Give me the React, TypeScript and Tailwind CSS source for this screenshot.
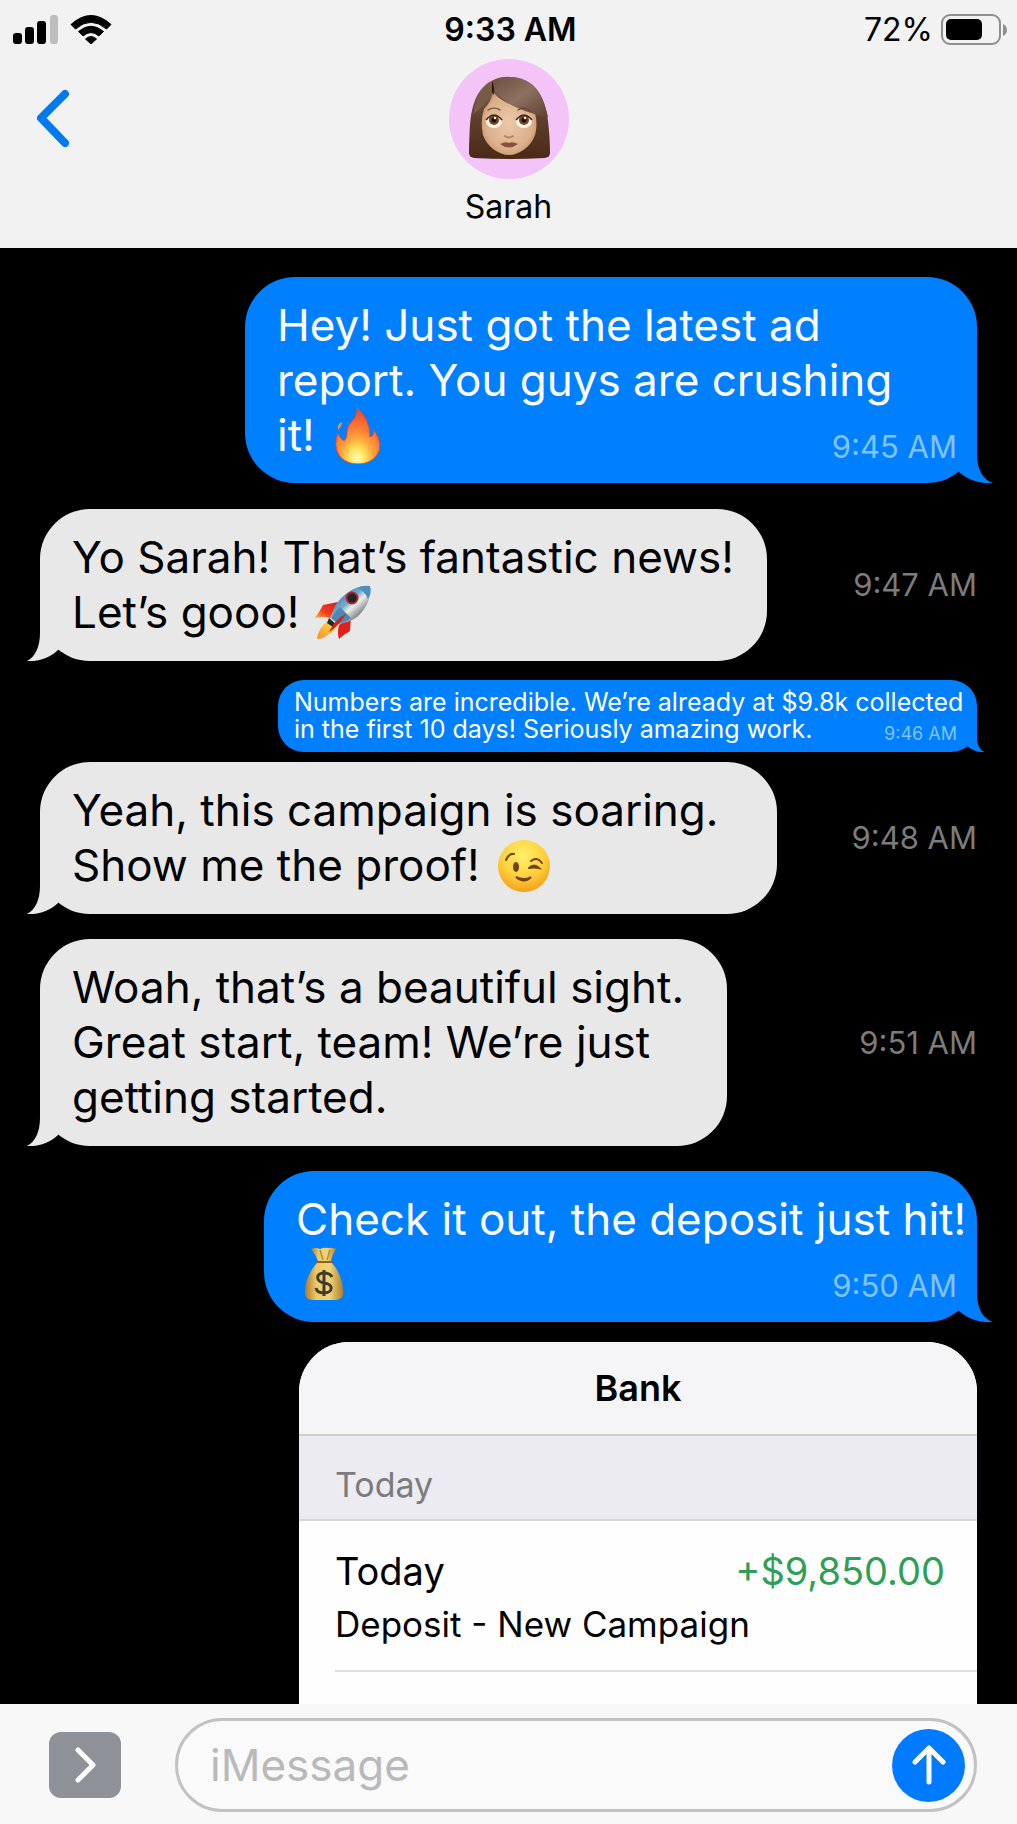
import type { ReactNode } from "react";

type Side = "sent" | "received";

function SignalIcon() {
  return (
    <svg width="46" height="30" viewBox="0 0 46 30" aria-label="Signal strength" role="img">
      <rect x="1" y="18" width="9" height="11" rx="3" />
      <rect x="13" y="12" width="9" height="17" rx="3" />
      <rect x="25" y="6" width="9" height="23" rx="3" />
      <rect x="38" y="0" width="8" height="29" rx="3" fill="#bdbdbd" />
    </svg>
  );
}

function WifiIcon() {
  return (
    <svg width="42" height="30" viewBox="0 0 42 30" aria-label="Wi-Fi" role="img">
      <g stroke="black" strokeWidth="1" strokeLinejoin="round">
        <path d="M1 9.500Q21-8.500 41 9.500L36.500 14Q21 .500 5.500 14Z" />
        <path d="M8.500 16.500Q21 6 33.500 16.500L29 21Q21 14 13 21Z" />
        <path d="M15.500 24Q21 19 26.500 24L21 29Z" />
      </g>
    </svg>
  );
}

function BatteryIcon() {
  return (
    <svg width="68" height="32" viewBox="0 0 68 32" aria-label="Battery" role="img">
      <rect x="1" y="1" width="58" height="29" rx="8" fill="none" stroke="#8e8e8e" strokeWidth="2" />
      <rect x="5" y="5" width="36" height="21" rx="5" />
      <path d="M62 10Q66 12 66 16T62 22Z" fill="#8e8e8e" />
    </svg>
  );
}

function Avatar() {
  return (
    <svg width="120" height="120" viewBox="0 0 120 120" role="img" aria-label="Sarah">
      <defs>
        <linearGradient id="hair" x1="0" y1="0" x2="0" y2="1">
          <stop offset="0" stopColor="#8a6c59" />
          <stop offset=".5" stopColor="#5e3f2d" />
          <stop offset="1" stopColor="#4a2917" />
        </linearGradient>
        <linearGradient id="bangs" x1="0" y1="0" x2="1" y2="1">
          <stop offset="0" stopColor="#6c4f3f" />
          <stop offset=".5" stopColor="#8d7060" />
          <stop offset="1" stopColor="#5f4331" />
        </linearGradient>
        <radialGradient id="skin" cx=".5" cy=".5" r=".6">
          <stop offset="0" stopColor="#ecc8a8" />
          <stop offset=".7" stopColor="#dcb08b" />
          <stop offset="1" stopColor="#bd8d66" />
        </radialGradient>
      </defs>
      <circle cx="60" cy="60" r="60" fill="#f4c4f8" />
      <path d="M60 18C34 18 23 37 21 66Q20 82 20 94Q20 98 25 99Q60 101 96 99Q101 98 101 94Q101 80 99 62C96 36 85 18 60 18Z" fill="url(#hair)" />
      <path d="M44 32C50 44 74 50 86 54Q89 66 86 76C82 88 70 96 60 96C50 96 38 88 34 76Q31 62 35 50Q43 42 44 32Z" fill="url(#skin)" />
      <path d="M43 22Q52 17 62 18C82 19 94 34 99 58Q92 57 82 54C63 48 47 40 43 22Z" fill="url(#bangs)" />
      <path d="M43 22Q41 33 45 36Q46 28 43 22Z" fill="#321c11" />
      <path d="M43 22Q28 31 24 55Q31 51 36 44Q44 36 43 22Z" fill="#785a48" />
      {[45, 75].map((x) => (
        <g key={x}>
          <ellipse cx={x} cy="62" rx="8" ry="7" fill="#fff6ec" />
          <circle cx={x} cy="61" r="5" fill="#754621" />
          <circle cx={x} cy="61" r="2.500" fill="#221006" />
          <circle cx={x + 1} cy="59" r="1.200" fill="white" />
          <path d={`M${x - 8} 61Q${x} 51 ${x + 8} 61`} fill="none" stroke="#3d2313" strokeWidth="1.500" />
        </g>
      ))}
      <path d="M39 51Q45 47 51 51M69 51Q75 47 81 52" fill="none" stroke="#6a432a" strokeWidth="1.200" strokeLinecap="round" />
      <path d="M56 77Q60 80 64 77" fill="none" stroke="#b9835f" strokeWidth="2" strokeLinecap="round" />
      <path d="M51 85Q57 82 60 84Q63 82 69 85Q60 92 51 85Z" fill="#8a4e3b" />
    </svg>
  );
}

function Fire() {
  return (
    <svg width="54" height="56" viewBox="0 0 54 56" className="shrink-0" role="img" aria-label="Fire">
      <defs>
        <radialGradient id="fire" cx=".48" cy=".9" r=".85">
          <stop offset="0" stopColor="#fff9bd" />
          <stop offset=".2" stopColor="#ffe760" />
          <stop offset=".42" stopColor="#ffa83c" />
          <stop offset=".65" stopColor="#ff7a35" />
          <stop offset="1" stopColor="#ee4a2a" />
        </radialGradient>
      </defs>
      <path d="M26 0Q39 11 39 29Q43 28 43 22Q53 37 46 47C38 59 16 59 8 47Q2 37 7 25Q9 31 13 33Q16 31 16 23Q17 17 21 13Q27 7 26 0Z" fill="url(#fire)" stroke="#ee4424" strokeWidth="1" />
      <path d="M7 22Q6 16 11 14Q11 18 7 22Z" fill="#ff8d48" />
    </svg>
  );
}

function Rocket() {
  return (
    <svg width="56" height="56" viewBox="0 0 56 56" className="shrink-0" role="img" aria-label="Rocket">
      <defs>
        <linearGradient id="hull" x1=".2" y1=".2" x2=".75" y2=".8">
          <stop offset="0" stopColor="#3d86b8" />
          <stop offset=".4" stopColor="#75a9cf" />
          <stop offset=".6" stopColor="#efeee8" />
          <stop offset="1" stopColor="#6b7379" />
        </linearGradient>
        <linearGradient id="exhaust" x1="1" y1="0" x2="0" y2="1">
          <stop offset="0" stopColor="#ffe34d" />
          <stop offset="1" stopColor="#f3902c" />
        </linearGradient>
        <linearGradient id="fin" x1="1" y1="0" x2="0" y2="1">
          <stop offset="0" stopColor="#d91b18" />
          <stop offset=".6" stopColor="#f0401f" />
          <stop offset="1" stopColor="#ffae35" />
        </linearGradient>
      </defs>
      <path d="M23 17L8 20Q5 26 0 33Q8 31 15 33Z" fill="url(#fin)" />
      <path d="M36 32L35 46Q28 50 24 54Q22 48 24 40Z" fill="#e0201a" />
      <path d="M13 36Q3 43 2 54Q9 54 14 49Q20 46 22 41Z" fill="url(#exhaust)" />
      <path d="M14 33L22 40L18 42L12 38Z" fill="#26282d" />
      <path d="M55 1Q42 0 32 8Q19 17 16 33L23 39Q41 37 49 24Q57 13 55 1Z" fill="url(#hull)" />
      <path d="M16 33Q20 27 25 22L36 33Q30 38 23 39Z" fill="#4f88b5" />
      <path d="M55 1Q47 0 42 3Q50 6 53 14Q57 9 55 1Z" fill="#4c8fc2" />
      <circle cx="37" cy="13" r="6.500" fill="#b32320" />
      <circle cx="37" cy="13" r="4.500" fill="#20242d" />
      <path d="M31 29Q21 33 14 47Q24 41 31 29Z" fill="#d3241b" />
    </svg>
  );
}

function Wink() {
  return (
    <svg width="56" height="56" viewBox="0 0 56 56" className="shrink-0" role="img" aria-label="Wink">
      <defs>
        <radialGradient id="wink" cx=".48" cy=".3" r=".75">
          <stop offset="0" stopColor="#fff06a" />
          <stop offset=".55" stopColor="#ffd03c" />
          <stop offset="1" stopColor="#f09a12" />
        </radialGradient>
      </defs>
      <circle cx="28" cy="28" r="26" fill="url(#wink)" />
      <ellipse cx="20" cy="29" rx="3" ry="5" fill="#714415" />
      <g fill="none" stroke="#714415" strokeWidth="2" strokeLinecap="round">
        <path d="M10 22Q13 15 18 16" />
        <path d="M35 23Q41 18 46 25" />
        <path d="M33 30Q38 25 43 30Q38 29 33 30" />
        <path d="M20 39Q28 46 35 39Q28 43 20 39Z" />
      </g>
    </svg>
  );
}

function MoneyBag() {
  return (
    <svg width="56" height="56" viewBox="0 0 56 56" className="shrink-0" role="img" aria-label="Money bag">
      <defs>
        <linearGradient id="bag">
          <stop offset="0" stopColor="#a9792a" />
          <stop offset=".3" stopColor="#ecc969" />
          <stop offset=".65" stopColor="#f0d478" />
          <stop offset="1" stopColor="#ad7d2d" />
        </linearGradient>
      </defs>
      <path d="M15 2Q20 0 24 2Q28 0 32 1Q37 0 40 2Q36 8 35 14H22Q20 8 15 2Z" fill="url(#bag)" />
      <path d="M22 15H35C44 24 48 38 47 48Q46 53 38 53H18Q10 53 9 48C8 37 13 24 22 15Z" fill="url(#bag)" />
      <path d="M21 15H36" stroke="#92601f" strokeWidth="2" strokeLinecap="round" />
      <path d="M24 3L27 13M34 3L31 13" stroke="#b98937" strokeWidth="1.500" />
      <path d="M36 30Q34 26 28 26C19 26 20 35 28 36C38 37 37 46 28 46Q21 46 20 41M28 23V49" fill="none" stroke="#423b2b" strokeWidth="3" />
    </svg>
  );
}

function Tail({ side, small }: { side: Side; small?: boolean }) {
  const sent = side === "sent";
  const size = small ? "h-[25px] w-6" : "h-[50px] w-12";
  const place = sent ? (small ? "-right-2" : "-right-4") : "-left-4 -scale-x-100";
  return (
    <svg
      viewBox="0 0 48 50"
      aria-hidden="true"
      className={`absolute bottom-0 ${size} ${place} ${sent ? "fill-[#007ffe]" : "fill-[#e8e8e9]"}`}
    >
      <path d={sent ? "M32 0V22C32 36 38 47 48 50C34 51 23 47 14 39L6 20Z" : "M32 0V22C32 36 37 46 45 50C34 51 22 47 14 39L6 20Z"} />
    </svg>
  );
}

function Line({ children }: { children: ReactNode }) {
  return <span className="flex h-[55px] items-center gap-4 whitespace-nowrap">{children}</span>;
}

function Received({ width, time, children }: { width: string; time: string; children: ReactNode }) {
  return (
    <li className="flex items-center justify-between">
      <div className={`relative rounded-[50px] bg-[#e8e8e9] py-[21px] pl-8 text-[44px] leading-[55px] text-black ${width}`}>
        <Tail side="received" />
        <p className="relative">{children}</p>
      </div>
      <time className="text-[31px] leading-10 text-[#7c7c7c]">{time}</time>
    </li>
  );
}

function Sent({ width, time, children }: { width: string; time: string; children: ReactNode }) {
  return (
    <li className="flex justify-end">
      <div className={`relative rounded-[50px] bg-[#007ffe] pt-[21px] pb-5 pl-8 text-[44px] leading-[55px] text-white ${width}`}>
        <Tail side="sent" />
        <p className="relative">{children}</p>
        <time className="absolute right-5 bottom-4 text-[31px] leading-10 text-[#80c4ff]">{time}</time>
      </div>
    </li>
  );
}

function BankCard() {
  return (
    <section className="overflow-hidden rounded-t-[50px] bg-[#fefefe] text-black">
      <h2 className="flex h-[94px] items-center justify-center border-b-2 border-[#cfcfd1] bg-[#f5f5f8] text-[36px] font-semibold">
        Bank
      </h2>
      <h3 className="flex h-[85px] items-end border-b-2 border-[#d6d6d9] bg-[#ecebf1] px-9 pb-[10px] text-[34px] leading-[48px] text-[#7b7b7d]">
        Today
      </h3>
      <div className="pl-9">
        <div className="border-b-2 border-[#dedede] pt-[23px] pb-5">
          <div className="flex items-center justify-between pr-8 text-[38px] leading-[54px]">
            <span>Today</span>
            <span className="text-[#2f9e57]">+$9,850.00</span>
          </div>
          <p className="text-[35px] leading-[52px]">Deposit - New Campaign</p>
        </div>
        <div className="h-20" />
      </div>
    </section>
  );
}

export default function App() {
  return (
    <div className="flex h-screen flex-col overflow-hidden bg-black font-['Inter','Liberation_Sans',sans-serif]">
      <header className="h-[248px] shrink-0 bg-[#f2f2f2] text-black">
        <div className="grid h-[59px] grid-cols-3 items-center pr-2 pl-3 text-[32px] leading-10">
          <div className="flex items-center gap-3">
            <SignalIcon />
            <WifiIcon />
          </div>
          <time className="text-center font-semibold">9:33 AM</time>
          <div className="flex items-center justify-end gap-2">
            <span>72%</span>
            <BatteryIcon />
          </div>
        </div>
        <div className="grid grid-cols-3">
          <button type="button" aria-label="Back" className="mt-7 ml-8 h-16 w-10">
            <svg width="40" height="64" viewBox="0 0 40 64" fill="none" stroke="#007af0" strokeWidth="8" strokeLinecap="round" strokeLinejoin="round">
              <path d="M33 7L9 31L33 56" />
            </svg>
          </button>
          <div className="flex flex-col items-center gap-2">
            <Avatar />
            <h1 className="text-[32px] leading-10">Sarah</h1>
          </div>
        </div>
      </header>

      <main className="min-h-0 flex-1 overflow-hidden px-10 pt-[29px]">
        <ol className="flex flex-col">
          <Sent width="w-[732px]" time="9:45 AM">
            <Line>Hey! Just got the latest ad</Line>
            <Line>report. You guys are crushing</Line>
            <Line>it! <Fire /></Line>
          </Sent>
          <li aria-hidden="true" className="h-[26px]" />
          <Received width="w-[727px]" time="9:47 AM">
            <Line>Yo Sarah! That’s fantastic news!</Line>
            <Line>Let’s gooo! <Rocket /></Line>
          </Received>
          <li className="mt-[19px] mb-[10px] flex justify-end">
            <div className="relative w-[699px] rounded-[26px] bg-[#007ffe] py-[9px] pl-4 text-[25px] leading-[27px] whitespace-nowrap text-white">
              <Tail side="sent" small />
              <p className="relative">
                Numbers are incredible. We’re already at $9.8k collected
                <br />
                in the first 10 days! Seriously amazing work.
              </p>
              <time className="absolute right-5 bottom-2 text-[18px] leading-5 text-[#80c4ff]">9:46 AM</time>
            </div>
          </li>
          <Received width="w-[737px]" time="9:48 AM">
            <Line>Yeah, this campaign is soaring.</Line>
            <Line>Show me the proof! <Wink /></Line>
          </Received>
          <li aria-hidden="true" className="h-[25px]" />
          <Received width="w-[687px]" time="9:51 AM">
            <Line>Woah, that’s a beautiful sight.</Line>
            <Line>Great start, team! We’re just</Line>
            <Line>getting started.</Line>
          </Received>
          <li aria-hidden="true" className="h-[25px]" />
          <Sent width="w-[713px]" time="9:50 AM">
            <Line>Check it out, the deposit just hit!</Line>
            <Line><MoneyBag /></Line>
          </Sent>
          <li className="mt-5 ml-auto w-[678px]">
            <BankCard />
          </li>
        </ol>
      </main>

      <form className="flex h-[120px] shrink-0 items-center bg-[#f8f8f8] pt-[2px] pr-10 pl-[49px]" onSubmit={(e) => e.preventDefault()}>
        <button type="button" aria-label="Show apps" className="flex h-[66px] w-[72px] shrink-0 items-center justify-center rounded-xl bg-[#8e9197]">
          <svg width="24" height="40" viewBox="0 0 24 40" fill="none" stroke="white" strokeWidth="5" strokeLinecap="round" strokeLinejoin="round">
            <path d="M5 5L20 20L5 35" />
          </svg>
        </button>
        <div className="ml-[54px] flex h-[94px] min-w-0 flex-1 items-center rounded-full border-[3px] border-[#c2c2c2] bg-[#fafafa] pr-[9px] pl-8">
          <input aria-label="iMessage" placeholder="iMessage" className="min-w-0 flex-1 bg-transparent text-[44px] text-black outline-none placeholder:text-[#b9b9b9]" />
          <button type="submit" aria-label="Send" className="flex size-[73px] shrink-0 items-center justify-center rounded-full bg-[#007aff]">
            <svg width="36" height="42" viewBox="0 0 36 42" fill="none" stroke="white" strokeWidth="5" strokeLinecap="round" strokeLinejoin="round">
              <path d="M18 38V4M4 18L18 4L32 18" />
            </svg>
          </button>
        </div>
      </form>
    </div>
  );
}
